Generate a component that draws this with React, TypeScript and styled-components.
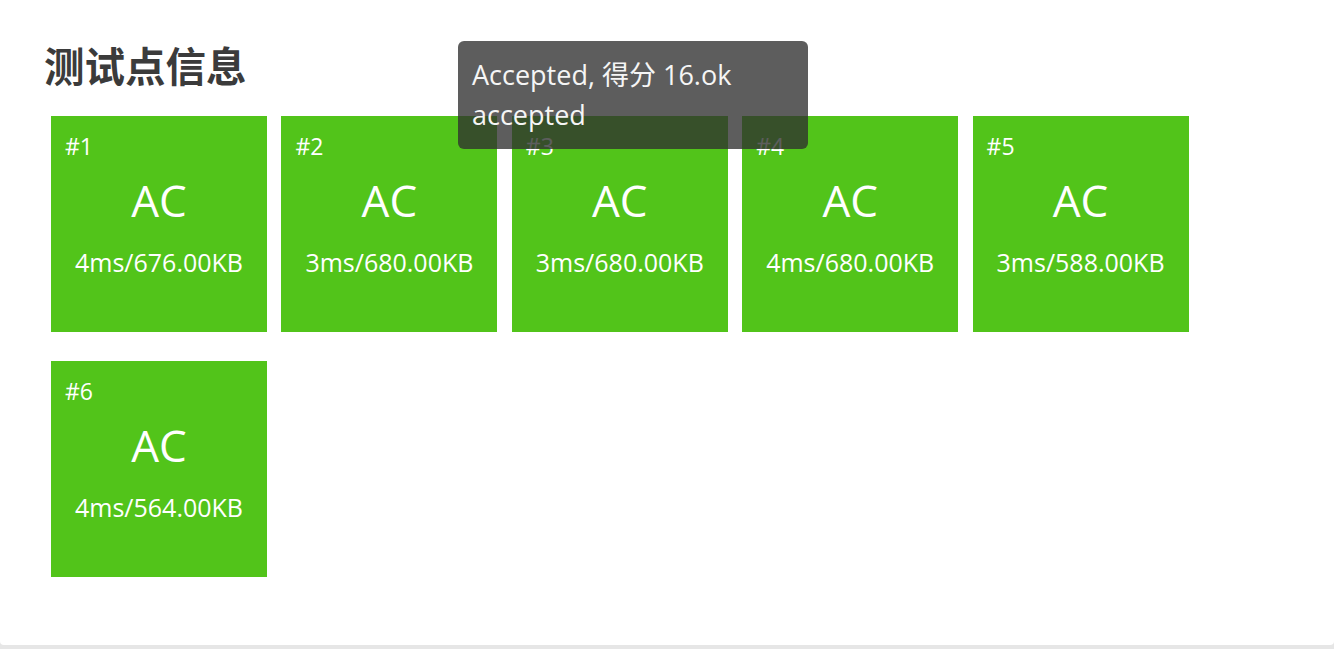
import React from "react";
import styled, { createGlobalStyle } from "styled-components";

const GlobalStyle = createGlobalStyle`
  html, body {
    margin: 0;
    padding: 0;
    background-color: #e6e6e6;
    font-family: "Open Sans", "Noto Sans CJK SC", sans-serif;
  }
`;

const Page = styled.div`
  width: 1334px;
  height: 649px;
  overflow: hidden;
`;

const Card = styled.div`
  position: relative;
  box-sizing: border-box;
  height: 645px;
  background-color: #fff;
  border-radius: 0 0 4px 4px;
  padding: 39px 44px 0;
`;

const Title = styled.h2`
  margin: 0;
  font-family: "Noto Sans CJK SC", sans-serif;
  font-size: 40.5px;
  line-height: 52px;
  font-weight: 700;
  color: #3b3b3b;
`;

const Cases = styled.div`
  display: flex;
  flex-wrap: wrap;
  column-gap: 14.4px;
  row-gap: 29px;
  margin-top: 25px;
  padding-left: 7px;
`;

const CaseBox = styled.div<{ $color: string }>`
  box-sizing: border-box;
  width: 216px;
  height: 216px;
  padding: 17px 14px 0;
  background-color: ${(p) => p.$color};
  color: #fff;
  display: flex;
  flex-direction: column;
`;

const CaseIndex = styled.div`
  font-size: 23px;
  line-height: 26px;
`;

const CaseStatus = styled.div`
  margin-top: 13px;
  text-align: center;
  font-size: 44px;
  line-height: 56px;
`;

const CaseUsage = styled.div`
  margin-top: 19px;
  text-align: center;
  font-size: 25px;
  line-height: 30px;
  white-space: nowrap;
`;

const Tooltip = styled.div`
  position: absolute;
  left: 458px;
  top: 41px;
  box-sizing: border-box;
  width: 350px;
  padding: 14px;
  border-radius: 6px;
  background-color: rgba(47, 47, 47, 0.78);
  color: #f5f5f5;
  font-size: 27px;
  line-height: 40px;
`;

type TestCase = {
  id: number;
  status: string;
  time: number;
  memory: string;
};

const cases: TestCase[] = [
  { id: 1, status: "AC", time: 4, memory: "676.00KB" },
  { id: 2, status: "AC", time: 3, memory: "680.00KB" },
  { id: 3, status: "AC", time: 3, memory: "680.00KB" },
  { id: 4, status: "AC", time: 4, memory: "680.00KB" },
  { id: 5, status: "AC", time: 3, memory: "588.00KB" },
  { id: 6, status: "AC", time: 4, memory: "564.00KB" },
];

const statusColor: Record<string, string> = {
  AC: "#52c41a",
};

const App: React.FC = () => {
  return (
    <Page>
      <GlobalStyle />
      <Card>
        <Title>测试点信息</Title>
        <Cases>
          {cases.map((c) => (
            <CaseBox key={c.id} $color={statusColor[c.status]}>
              <CaseIndex>#{c.id}</CaseIndex>
              <CaseStatus>{c.status}</CaseStatus>
              <CaseUsage>
                {c.time}ms/{c.memory}
              </CaseUsage>
            </CaseBox>
          ))}
        </Cases>
        <Tooltip>Accepted, 得分 16.ok accepted</Tooltip>
      </Card>
    </Page>
  );
};

export default App;
